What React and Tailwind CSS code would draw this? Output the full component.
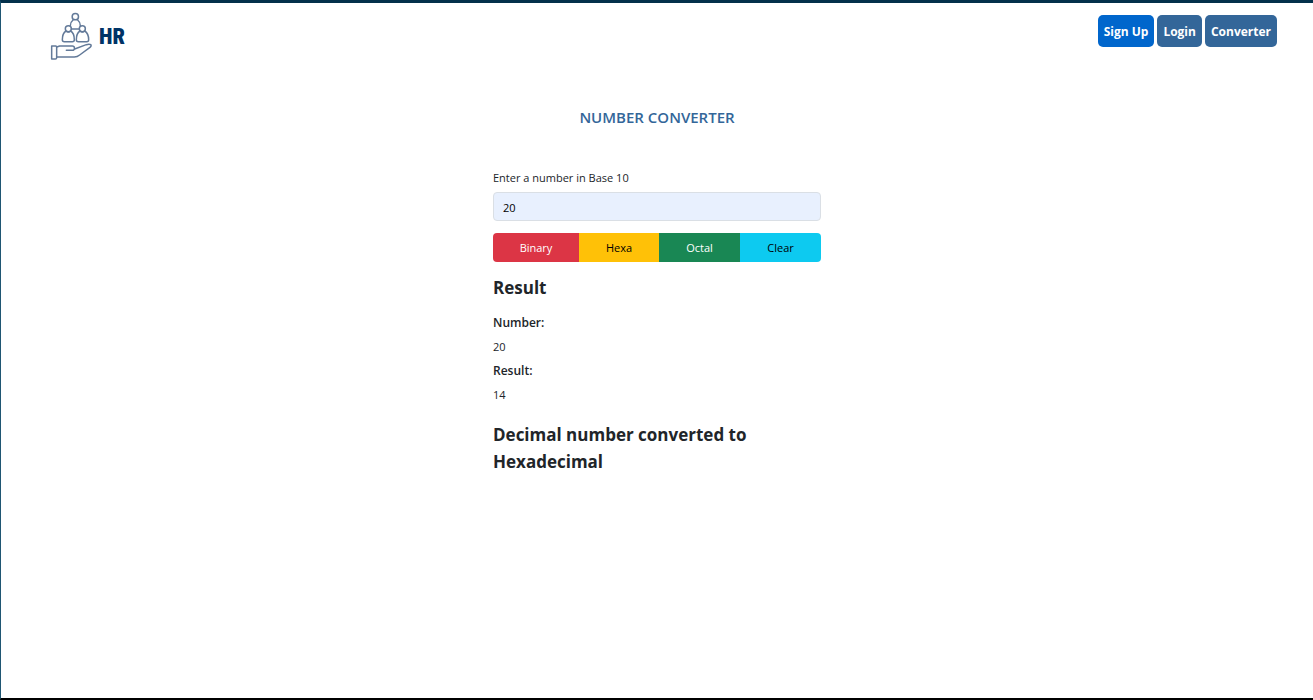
import { useState } from "react";

const operations = {
  Binary: { base: 2, className: "grow-[86] bg-[#dc3545] text-white" },
  Hexadecimal: { base: 16, className: "grow-[80] bg-[#ffc107] text-black", label: "Hexa" },
  Octal: { base: 8, className: "grow-[81] bg-[#198754] text-white" },
};

function Logo() {
  return (
    <a href="#home" aria-label="HR home" className="flex items-center gap-1.5 text-[#003366]">
      <svg
        viewBox="30 36 129 147"
        className="h-[49px] w-[43px]"
        fill="none"
        stroke="#637a99"
        strokeWidth="4.5"
        strokeLinejoin="round"
        strokeLinecap="round"
      >
        <circle cx="106" cy="50" r="9.5" />
        <path d="M99 60 C94 64 91 70 91 77 M113 60 C118 64 121 70 121 77 M94 87 H118" />
        <circle cx="85" cy="86" r="9" />
        <circle cx="127" cy="86" r="9" />
        <path d="M78 93 C70 98 67 108 67 119 Q67 125 73 125 H97 Q103 125 103 119 C103 108 100 98 92 93 Q85 99 78 93 Z" />
        <path d="M120 93 C112 98 109 108 109 119 Q109 125 115 125 H140 Q146 125 146 119 C146 108 142 98 134 93 Q127 99 120 93 Z" />
        <path d="M35 138 H47 Q50 138 50 142 V173 Q50 177 46 177 H35 Z" />
        <path d="M50 141 L59 138 H97 C105 138 106 151 97 151 H79 M104 147 L139 134 C151 130 158 135 150 142 L119 165 Q112 171 103 171 H50" />
      </svg>
      <span className="font-['Roboto_Condensed','Roboto',sans-serif] text-[22px] leading-none font-black">
        HR
      </span>
    </a>
  );
}

function NavLink({ children, href, className }) {
  return (
    <a href={href} className={`flex h-8 items-center rounded-[5px] px-1.5 pt-0.5 text-[12px] font-bold text-white ${className}`}>
      {children}
    </a>
  );
}

export default function App() {
  const [value, setValue] = useState("20");
  const [result, setResult] = useState({ number: "20", output: "14", name: "Hexadecimal" });

  const convert = (name) => {
    const number = parseInt(value, 10);
    if (Number.isNaN(number)) return;
    setResult({ number: String(number), output: number.toString(operations[name].base).toUpperCase(), name });
  };

  const clear = () => {
    setValue("");
    setResult(null);
  };

  return (
    <div className="flex min-h-screen flex-col border-t-3 border-b-2 border-l border-t-[#03314b] border-b-black border-l-[#1f5673] bg-white font-['Open_Sans','Noto_Sans',sans-serif] text-[11px] text-[#212529]">
      <header className="flex items-start justify-between pt-[9px] pr-9 pl-[49px]">
        <Logo />
        <nav className="flex gap-[3px] pt-[3px]">
          <NavLink href="#signup" className="bg-[#0066cc]">Sign Up</NavLink>
          <NavLink href="#login" className="bg-[#336699]">Login</NavLink>
          <NavLink href="#converter" className="bg-[#336699]">Converter</NavLink>
        </nav>
      </header>

      <main className="mx-auto mt-11 flex w-full max-w-[328px] flex-col">
        <h1 className="text-center text-[15px] leading-6 font-semibold text-[#336699]">NUMBER CONVERTER</h1>

        <label htmlFor="number" className="mt-[37px] leading-6">Enter a number in Base 10</label>
        <input
          id="number"
          type="text"
          inputMode="numeric"
          value={value}
          onChange={(e) => setValue(e.target.value)}
          className="mt-0.5 h-[29px] rounded-[4px] border border-[#dadfe5] bg-[#e8f0fe] px-[9px] pt-0.5 text-black"
        />

        <div className="mt-3 flex h-[29px] overflow-hidden rounded-[4px]">
          {Object.entries(operations).map(([name, op]) => (
            <button key={name} type="button" onClick={() => convert(name)} className={`basis-0 pt-0.5 ${op.className}`}>
              {op.label ?? name}
            </button>
          ))}
          <button type="button" onClick={clear} className="grow-[81] basis-0 bg-[#0dcaf0] pt-0.5 text-black">
            Clear
          </button>
        </div>

        {result && (
          <section>
            <h2 className="mt-3 text-[17px] leading-[27px] font-bold">Result</h2>
            <dl className="mt-2.5 leading-6">
              <dt className="text-[12px] font-semibold">Number:</dt>
              <dd>{result.number}</dd>
              <dt className="text-[12px] font-semibold">Result:</dt>
              <dd>{result.output}</dd>
            </dl>
            <p className="mt-3.5 text-[17px] leading-[27px] font-bold">
              Decimal number converted to {result.name}
            </p>
          </section>
        )}
      </main>
    </div>
  );
}
